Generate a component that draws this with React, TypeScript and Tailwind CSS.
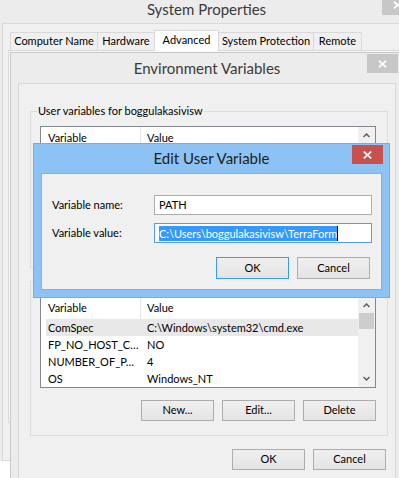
import React from "react";

function XIcon() {
  return (
    <svg width="9" height="8" viewBox="0 0 9 8" className="block">
      <line x1="0.8" y1="0.6" x2="8.2" y2="7.4" stroke="white" strokeWidth="1.7" />
      <line x1="8.2" y1="0.6" x2="0.8" y2="7.4" stroke="white" strokeWidth="1.7" />
    </svg>
  );
}

function Chevron({ down }: { down?: boolean }) {
  return (
    <svg width="7" height="5" viewBox="0 0 7 5" className="block">
      <polyline
        points={down ? "0.5,1 3.5,4 6.5,1" : "0.5,4 3.5,1 6.5,4"}
        fill="none"
        stroke="#5f5f5f"
        strokeWidth="1.5"
      />
    </svg>
  );
}

function Btn({ label, h = "h-[21px]", primary }: { label: string; h?: string; primary?: boolean }) {
  return (
    <div
      className={`w-[73px] ${h} flex items-center justify-center border bg-[#e6e6e6] bg-gradient-to-b from-[#efefef] to-[#e4e4e4] ${
        primary ? "border-[#3c9af0]" : "border-[#adadad]"
      }`}
    >
      {label}
    </div>
  );
}

type Row = [string, string];

function ListView({ rows, heightClass, selectedFirst }: { rows: Row[]; heightClass: string; selectedFirst?: boolean }) {
  return (
    <div className={`ml-[9px] w-[336px] ${heightClass} border border-[#828790] bg-white flex overflow-hidden`}>
      <div className="flex-1 flex flex-col">
        <div className="h-[22px] flex shrink-0 bg-white">
          <div className="w-[100px] h-full border-r border-[#e5e5e5] pl-[7px] flex items-center">Variable</div>
          <div className="pl-[6px] flex items-center">Value</div>
        </div>
        {rows.map(([k, v], i) => (
          <div
            key={k}
            className={`ml-[5px] h-[17px] pt-[1px] shrink-0 flex items-center whitespace-nowrap ${
              selectedFirst && i === 0 ? "bg-[#e8e8e8]" : ""
            }`}
          >
            <div className="w-[95px] pl-[2px] overflow-hidden">{k}</div>
            <div className="pl-[6px]">{v}</div>
          </div>
        ))}
      </div>
      <div className="w-[17px] bg-[#f0f0f0] flex flex-col">
        <div className="h-[16px] flex items-center justify-center shrink-0">
          <Chevron />
        </div>
        <div className="mx-[1px] h-[16px] bg-[#cdcdcd] shrink-0" />
        <div className="flex-1" />
        <div className="h-[17px] flex items-center justify-center shrink-0">
          <Chevron down />
        </div>
      </div>
    </div>
  );
}

export default function App() {
  const sysRows: Row[] = [
    ["ComSpec", "C:\\Windows\\system32\\cmd.exe"],
    ["FP_NO_HOST_C…", "NO"],
    ["NUMBER_OF_P…", "4"],
    ["OS", "Windows_NT"],
  ];
  const tabs = [
    { t: "Computer Name", w: "w-[88px]" },
    { t: "Hardware", w: "w-[58px]" },
    { t: "Advanced", w: "w-[65px]", sel: true },
    { t: "System Protection", w: "w-[96px]" },
    { t: "Remote", w: "w-[49px]" },
  ];
  return (
    <div className="relative w-[399px] h-[478px] overflow-hidden bg-white font-['Lato',sans-serif] text-[11px] text-black">
      {/* System Properties window (behind) */}
      <div className="absolute left-[-6px] top-0 w-[425px] h-[461px] bg-[#ececec] flex flex-col">
        <div className="relative h-[23px] flex justify-center shrink-0">
          <span className="text-[15px] leading-[18px] text-[#3a3a3a]">System Properties</span>
          <div className="absolute right-[6px] top-[-5px] w-[31px] h-[20px] bg-[#c7c7c7] flex items-center justify-center">
            <XIcon />
          </div>
        </div>
        <div className="flex-1 mx-[8px] border-t border-l border-b border-[#d9d9d9] bg-[#f0f0f0] flex flex-col">
          <div className="ml-[7px] mt-[6px] h-[20px] flex items-end">
            {tabs.map((tb, i) => (
              <div
                key={tb.t}
                className={`${tb.w} ${i > 0 ? "-ml-px" : ""} flex items-center justify-center border-t border-l border-r border-[#d9d9d9] whitespace-nowrap ${
                  tb.sel ? "h-[21px] -mb-px bg-white relative z-10 pb-[2px]" : "h-[18px] bg-[#f0f0f0]"
                }`}
              >
                {tb.t}
              </div>
            ))}
          </div>
          <div className="ml-[5px] w-[420px] h-[373px] border border-[#d9d9d9] bg-[#f7f7f7]" />
        </div>
      </div>

      {/* Environment Variables window */}
      <div className="absolute left-[10px] top-[52px] w-[394px] h-[440px] border border-[#c8c8c8] bg-[#ececec] flex flex-col">
        <div className="relative h-[30px] flex justify-center shrink-0">
          <span className="mt-[6px] text-[15px] leading-[18px] text-[#3a3a3a]">Environment Variables</span>
          <div className="absolute right-[5px] top-[1px] w-[31px] h-[19px] bg-[#c7c7c7] flex items-center justify-center">
            <XIcon />
          </div>
        </div>
        <div className="flex-1 mx-[7px] border border-[#d9d9d9] bg-[#f0f0f0] flex flex-col">
          <fieldset className="mt-[20px] ml-[11px] w-[358px] border border-[#dcdcdc] pb-[10px] min-w-0">
            <legend className="ml-[6px] px-[1px] leading-[14px]">User variables for boggulakasivisw</legend>
            <div className="mt-[8px]">
              <ListView rows={[]} heightClass="h-[100px]" />
            </div>
            <div className="mt-[10px] ml-[9px] w-[336px] h-[21px]" />
          </fieldset>
          <fieldset className="mt-[6px] ml-[11px] w-[358px] border border-[#dcdcdc] pb-[14px] min-w-0">
            <legend className="ml-[6px] px-[1px] leading-[14px] invisible">System variables</legend>
            <div className="mt-[8px]">
              <ListView rows={sysRows} heightClass="h-[92px]" selectedFirst />
            </div>
            <div className="mt-[12px] ml-[9px] w-[336px] flex justify-end gap-[8px]">
              <Btn label="New..." />
              <Btn label="Edit..." />
              <Btn label="Delete" />
            </div>
          </fieldset>
          <div className="mt-[13px] mr-[9px] flex justify-end gap-[8px]">
            <Btn label="OK" />
            <Btn label="Cancel" />
          </div>
        </div>
      </div>

      {/* Edit User Variable dialog (active) */}
      <div className="absolute left-[33px] top-[143px] w-[357px] h-[155px] border border-[#6eaeea] bg-[#8cc3f4] flex flex-col">
        <div className="relative h-[29px] flex justify-center shrink-0">
          <span className="mt-[5px] text-[15px] leading-[18px] text-[#1e1e1e]">Edit User Variable</span>
          <div className="absolute right-[6px] top-[1px] w-[31px] h-[19px] bg-[#c75050] flex items-center justify-center">
            <XIcon />
          </div>
        </div>
        <div className="flex-1 mx-[7px] mb-[7px] border border-[#7ab2e8] bg-[#f0f0f0] flex flex-col">
          <div className="mt-[21px] h-[20px] flex items-center">
            <div className="w-[112px] pl-[10px]">Variable name:</div>
            <div className="w-[218px] h-[20px] border border-[#abadb3] bg-white pl-[4px] flex items-center">PATH</div>
          </div>
          <div className="mt-[8px] h-[20px] flex items-center">
            <div className="w-[112px] pl-[10px]">Variable value:</div>
            <div className="w-[218px] h-[20px] border border-[#569de5] bg-white pl-[4px] flex items-center">
              <span className="bg-[#3399ff] text-white leading-[15px] whitespace-nowrap">
                C:\Users\boggulakasivisw\TerraForm
              </span>
              <span className="w-px h-[15px] bg-black" />
            </div>
          </div>
          <div className="mt-[14px] pr-[11px] flex justify-end gap-[8px]">
            <Btn label="OK" h="h-[22px]" primary />
            <Btn label="Cancel" h="h-[22px]" />
          </div>
        </div>
      </div>
    </div>
  );
}
